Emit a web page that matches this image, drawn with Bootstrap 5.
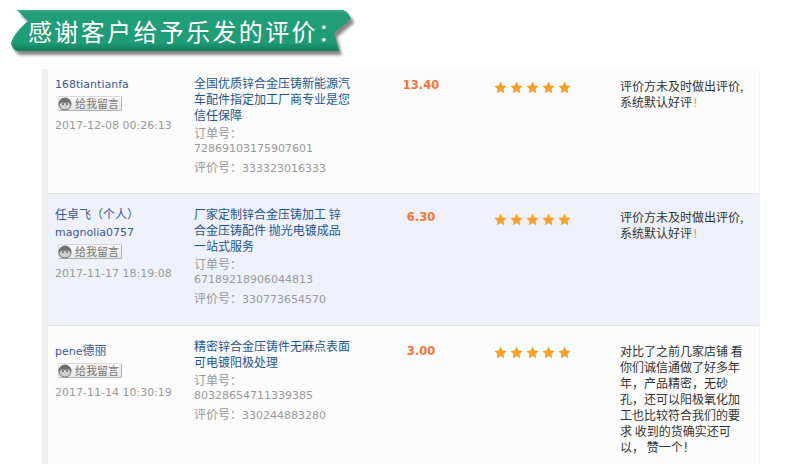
<!DOCTYPE html>
<html lang="zh">
<head>
<meta charset="utf-8">
<title>评价</title>
<link rel="stylesheet" href="https://cdn.jsdelivr.net/npm/bootstrap@5.3.0/dist/css/bootstrap.min.css">
<style>
html,body{height:476px;overflow:hidden;background:#fff}
body{font:12px/16px "Noto Sans CJK SC",sans-serif;color:#333}
.lat{font-family:"DejaVu Sans",sans-serif;font-size:11px}
.banner-wrap{height:69px}
.banner-wrap svg{display:block}
.banner-txt{font-family:"Noto Sans CJK SC",sans-serif;font-size:24px;font-weight:400;letter-spacing:2.35px;fill:#fff}
.panel{margin-left:42px;width:718px;border-left:6px solid #f1f1f1;border-right:1px solid #f3f3f3}
.rv{background:#fcfcfc;border-bottom:1px solid #e3e3e3}
.rv.alt{background:#eef1f9}
.rv:last-child{border-bottom:0}
.r1{height:125px}.r2{height:132px}.r3{height:138px}
.c-name{width:146px;padding-left:7px}
.c-title{width:158px}
.c-price{width:138px;text-align:center;color:#fb7433;font:700 11.5px/16px "DejaVu Sans",sans-serif}
.c-star{width:130px;padding-left:4px}
.c-note{width:125px}
.r1 .c-name{padding-top:8px}.r1 .c-title{padding-top:6px}.r1 .c-price{padding-top:8px}.r1 .c-star{padding-top:12px}.r1 .c-note{padding-top:9px}
.r2 .c-name{padding-top:12px}.r2 .c-title{padding-top:12px}.r2 .c-price{padding-top:15px}.r2 .c-star{padding-top:19px}.r2 .c-note{padding-top:15px}
.r3 .c-name{padding-top:16px}.r3 .c-title{padding-top:12px}.r3 .c-price{padding-top:17px}.r3 .c-star{padding-top:20px}.r3 .c-note{padding-top:17px}
.who{color:#3b5a9a;display:block;text-decoration:none;line-height:16px}
.r2 .who + .who{margin-top:3px}
.msg{display:inline-flex;align-items:center;gap:3px;width:64px;height:15px;margin:3px 0 4px 3px;padding:0;background:linear-gradient(#fbfbfb,#e6e6e6);border:1px solid #d8d8d8;border-right-color:#b0b0b0;border-bottom-color:#b0b0b0;border-radius:2px;color:#777;font-size:11px;line-height:13px;vertical-align:top}
.msg svg{flex:none;margin-left:-1px}
.stamp{color:#999;display:block;margin-top:3px}
.ttl{color:#1f5592;display:block;text-decoration:none}
.gy{color:#999;display:block}
.gy.ord{margin-top:2px}
.gy.rvw{margin-top:2px}
.stars{display:flex;gap:3px}
.exc{color:#e2a33c;font-family:"DejaVu Sans",sans-serif;margin-left:1px}
</style>
</head>
<body>
<svg width="0" height="0" class="position-absolute">
<defs>
<symbol id="st" viewBox="0 0 24 24"><path fill="#f6a11f" d="M12 .8l3.4 7.3 7.9 1-5.8 5.5 1.5 7.9-7-3.9-7 3.9 1.5-7.9L.7 9.1l7.9-1z"/></symbol>
<symbol id="fc" viewBox="0 0 14 14"><circle cx="7" cy="7" r="6.5" fill="#6f6f6f"/><path d="M1.6 8.2Q2 5.2 4.6 5.6 7 6.4 9.4 5.6 12 5.2 12.4 8.2 11.6 12.4 7 12.6 2.4 12.4 1.6 8.2Z" fill="#cfcfcf"/><circle cx="5" cy="7" r=".9" fill="#555"/><circle cx="9" cy="7" r=".9" fill="#555"/></symbol>
</defs>
</svg>
<div class="banner-wrap">
<svg width="360" height="69" viewBox="0 0 360 69" aria-label="banner">
<defs>
<linearGradient id="gr" x1="0" y1="0" x2="0" y2="1"><stop offset="0" stop-color="#34a888"/><stop offset=".1" stop-color="#209e78"/><stop offset=".8" stop-color="#1e9c76"/><stop offset="1" stop-color="#137a5a"/></linearGradient>
<filter id="bl" x="-5%" y="-20%" width="110%" height="140%"><feGaussianBlur stdDeviation="1.4"/></filter>
</defs>
<path d="M17 10H343Q348 11 351 19L334 33 339 51H18Q12 50 11 43Q13 34 28 21Z" transform="translate(3 4)" fill="#444" opacity=".65" filter="url(#bl)"/>
<path d="M17 10H343Q348 11 351 19L334 33 339 51H18Q12 50 11 43Q13 34 28 21Z" fill="url(#gr)"/>
<text x="28" y="41" class="banner-txt">感谢客户给予乐发的评价：</text>
</svg>
</div>
<div class="panel">

<div class="rv r1 d-flex">
<div class="c-name"><a class="who lat" href="#">168tiantianfa</a>
<span class="msg"><svg width="14" height="14"><use href="#fc"/></svg>给我留言</span>
<span class="stamp lat">2017-12-08 00:26:13</span></div>
<div class="c-title"><a class="ttl" href="#">全国优质锌合金压铸新能源汽车配件指定加工厂商专业是您信任保障</a>
<span class="gy ord">订单号：</span><span class="gy lat">72869103175907601</span><span class="gy rvw">评价号：<span class="lat">333323016333</span></span></div>
<div class="c-price">13.40</div>
<div class="c-star"><div class="stars"><svg width="13" height="13"><use href="#st"/></svg><svg width="13" height="13"><use href="#st"/></svg><svg width="13" height="13"><use href="#st"/></svg><svg width="13" height="13"><use href="#st"/></svg><svg width="13" height="13"><use href="#st"/></svg></div></div>
<div class="c-note"><div>评价方未及时做出评价,</div><div>系统默认好评<span class="exc">!</span></div></div>
</div>

<div class="rv alt r2 d-flex">
<div class="c-name"><a class="who" href="#">任卓飞（个人）</a><a class="who lat" href="#">magnolia0757</a>
<span class="msg"><svg width="14" height="14"><use href="#fc"/></svg>给我留言</span>
<span class="stamp lat">2017-11-17 18:19:08</span></div>
<div class="c-title"><a class="ttl" href="#">厂家定制锌合金压铸加工 锌合金压铸配件 抛光电镀成品一站式服务</a>
<span class="gy ord">订单号：</span><span class="gy lat">67189218906044813</span><span class="gy rvw">评价号：<span class="lat">330773654570</span></span></div>
<div class="c-price">6.30</div>
<div class="c-star"><div class="stars"><svg width="13" height="13"><use href="#st"/></svg><svg width="13" height="13"><use href="#st"/></svg><svg width="13" height="13"><use href="#st"/></svg><svg width="13" height="13"><use href="#st"/></svg><svg width="13" height="13"><use href="#st"/></svg></div></div>
<div class="c-note"><div>评价方未及时做出评价,</div><div>系统默认好评<span class="exc">!</span></div></div>
</div>

<div class="rv r3 d-flex">
<div class="c-name"><a class="who" href="#"><span class="lat">pene</span>德丽</a>
<span class="msg"><svg width="14" height="14"><use href="#fc"/></svg>给我留言</span>
<span class="stamp lat">2017-11-14 10:30:19</span></div>
<div class="c-title"><a class="ttl" href="#">精密锌合金压铸件无麻点表面可电镀阳极处理</a>
<span class="gy ord">订单号：</span><span class="gy lat">80328654711339385</span><span class="gy rvw">评价号：<span class="lat">330244883280</span></span></div>
<div class="c-price">3.00</div>
<div class="c-star"><div class="stars"><svg width="13" height="13"><use href="#st"/></svg><svg width="13" height="13"><use href="#st"/></svg><svg width="13" height="13"><use href="#st"/></svg><svg width="13" height="13"><use href="#st"/></svg><svg width="13" height="13"><use href="#st"/></svg></div></div>
<div class="c-note">对比了之前几家店铺 看你们诚信通做了好多年年，产品精密，无砂孔，还可以阳极氧化加工也比较符合我们的要求 收到的货确实还可以， 赞一个！</div>
</div>

</div>
<script src="https://cdn.jsdelivr.net/npm/bootstrap@5.3.0/dist/js/bootstrap.bundle.min.js"></script>
</body>
</html>
